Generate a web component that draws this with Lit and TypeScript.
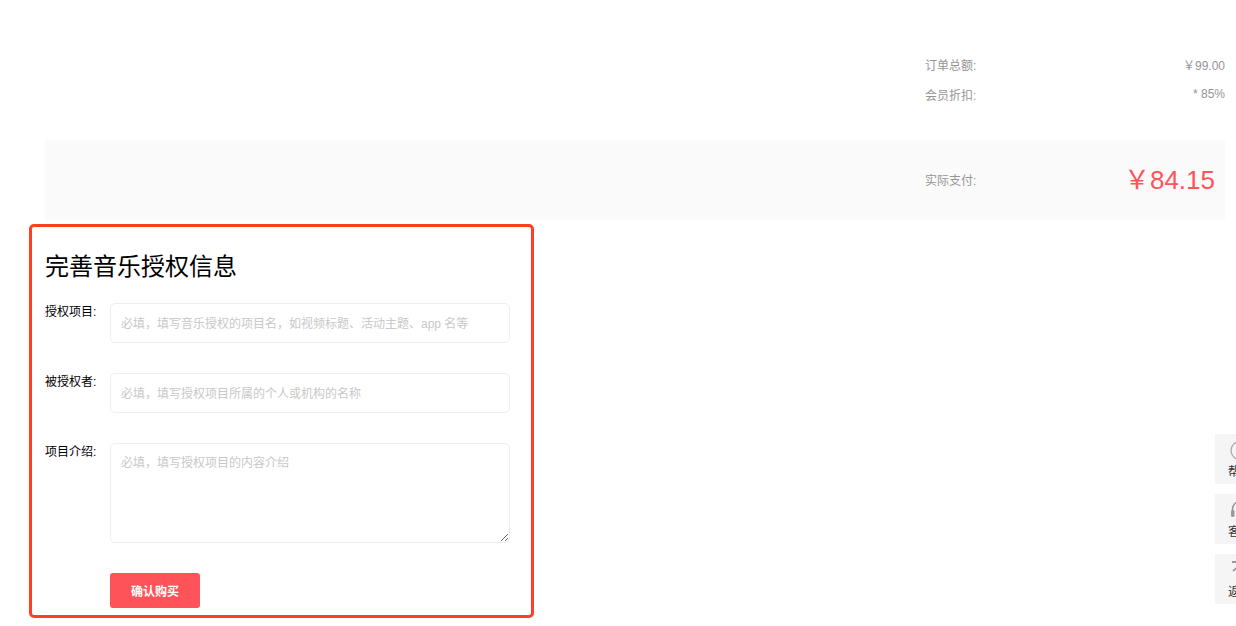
import { LitElement, html, css } from "lit";
import { customElement } from "lit/decorators.js";

@customElement("app-root")
export class AppRoot extends LitElement {
  static styles = css`
    :host {
      display: block;
      position: relative;
      width: 1236px;
      height: 626px;
      overflow: hidden;
      background: #fff;
      font-family: "Liberation Sans", "Noto Sans CJK SC", sans-serif;
      font-size: 12px;
      color: #000;
    }
    .page { padding: 49px 11px 0 45px; }
    .summary { margin-left: 880px; width: 300px; height: 91px; color: #959595; }
    .row { display: flex; justify-content: space-between; align-items: center; height: 30px; }
    .total {
      height: 80px;
      background: #fafafa;
      display: flex;
      align-items: center;
      justify-content: space-between;
      padding: 0 10px 0 880px;
      color: #959595;
    }
    .total-label { margin-bottom: 2px; }
    .price { font-size: 26px; color: #ff535a; line-height: 30px; }
    .form { display: flex; flex-direction: column; width: 465px; }
    h2 { margin: 0; padding-top: 30px; height: 53px; font-size: 24px; font-weight: 400; line-height: 33px; box-sizing: content-box; }
    .field { display: flex; margin-bottom: 30px; }
    label { width: 65px; flex: none; line-height: 17px; padding-top: 1px; }
    input, textarea {
      display: block;
      box-sizing: border-box;
      width: 400px;
      border: 1px solid #eee;
      border-radius: 5px;
      padding: 0 10px;
      margin: 0;
      font: inherit;
      outline: none;
      background: #fff;
    }
    input { height: 40px; padding-top: 2px; }
    textarea { height: 100px; padding-top: 11px; line-height: 17px; }
    input::placeholder, textarea::placeholder { color: #c8c8c8; opacity: 1; }
    button {
      margin-left: 65px;
      width: 90px;
      height: 35px;
      border: 0;
      border-radius: 3px;
      background: #ff535a;
      color: #fff;
      font: inherit;
      font-weight: 700;
      padding: 0;
    }
    .highlight {
      position: absolute;
      left: 29px;
      top: 224px;
      width: 505px;
      height: 394px;
      box-sizing: border-box;
      border: 3px solid #ff3f25;
      border-radius: 5px;
      pointer-events: none;
    }
    .side {
      position: absolute;
      left: 1215px;
      top: 434px;
      display: flex;
      flex-direction: column;
      gap: 10px;
    }
    .tool {
      width: 50px;
      height: 50px;
      background: #f5f5f5;
      display: flex;
      flex-direction: column;
      align-items: center;
      color: #333;
      line-height: 17px;
    }
    .tool svg { display: block; margin-top: 6px; width: 20px; height: 20px; margin-bottom: 4px; }
  `;

  render() {
    return html`
      <div class="page">
        <div class="summary">
          <div class="row"><span>订单总额:</span><span>￥99.00</span></div>
          <div class="row"><span>会员折扣:</span><span>* 85%</span></div>
        </div>
        <div class="total"><span class="total-label">实际支付:</span><span class="price">￥84.15</span></div>
        <form class="form">
          <h2>完善音乐授权信息</h2>
          <div class="field">
            <label>授权项目:</label>
            <input placeholder="必填，填写音乐授权的项目名，如视频标题、活动主题、app 名等" />
          </div>
          <div class="field">
            <label>被授权者:</label>
            <input placeholder="必填，填写授权项目所属的个人或机构的名称" />
          </div>
          <div class="field">
            <label>项目介绍:</label>
            <textarea placeholder="必填，填写授权项目的内容介绍"></textarea>
          </div>
          <button type="button">确认购买</button>
        </form>
      </div>
      <div class="highlight"></div>
      <div class="side">
        <div class="tool">
          <svg viewBox="0 0 20 20" fill="none" stroke="#aaa" stroke-width="1.3">
            <circle cx="10" cy="10.5" r="9"></circle>
            <path d="M7.5 8.5a2.5 2.5 0 1 1 3.6 2.2c-.8.4-1.1.9-1.1 1.8M10 14.5v1"></path>
          </svg>
          <span>帮助</span>
        </div>
        <div class="tool">
          <svg viewBox="0 0 20 20" fill="none" stroke="#999" stroke-width="1.6">
            <path d="M2.5 13V9a7.5 7.5 0 0 1 15 0v4"></path>
            <rect x="1" y="10" width="3.5" height="7" rx="1.5" fill="#999" stroke="none"></rect>
            <rect x="15.5" y="10" width="3.5" height="7" rx="1.5" fill="#999" stroke="none"></rect>
          </svg>
          <span>客服</span>
        </div>
        <div class="tool">
          <svg viewBox="0 0 20 20" fill="none" stroke="#999" stroke-width="1.8">
            <path d="M2 2h16M10 19V5M3 11l7-6 7 6"></path>
          </svg>
          <span>返回</span>
        </div>
      </div>
    `;
  }
}
